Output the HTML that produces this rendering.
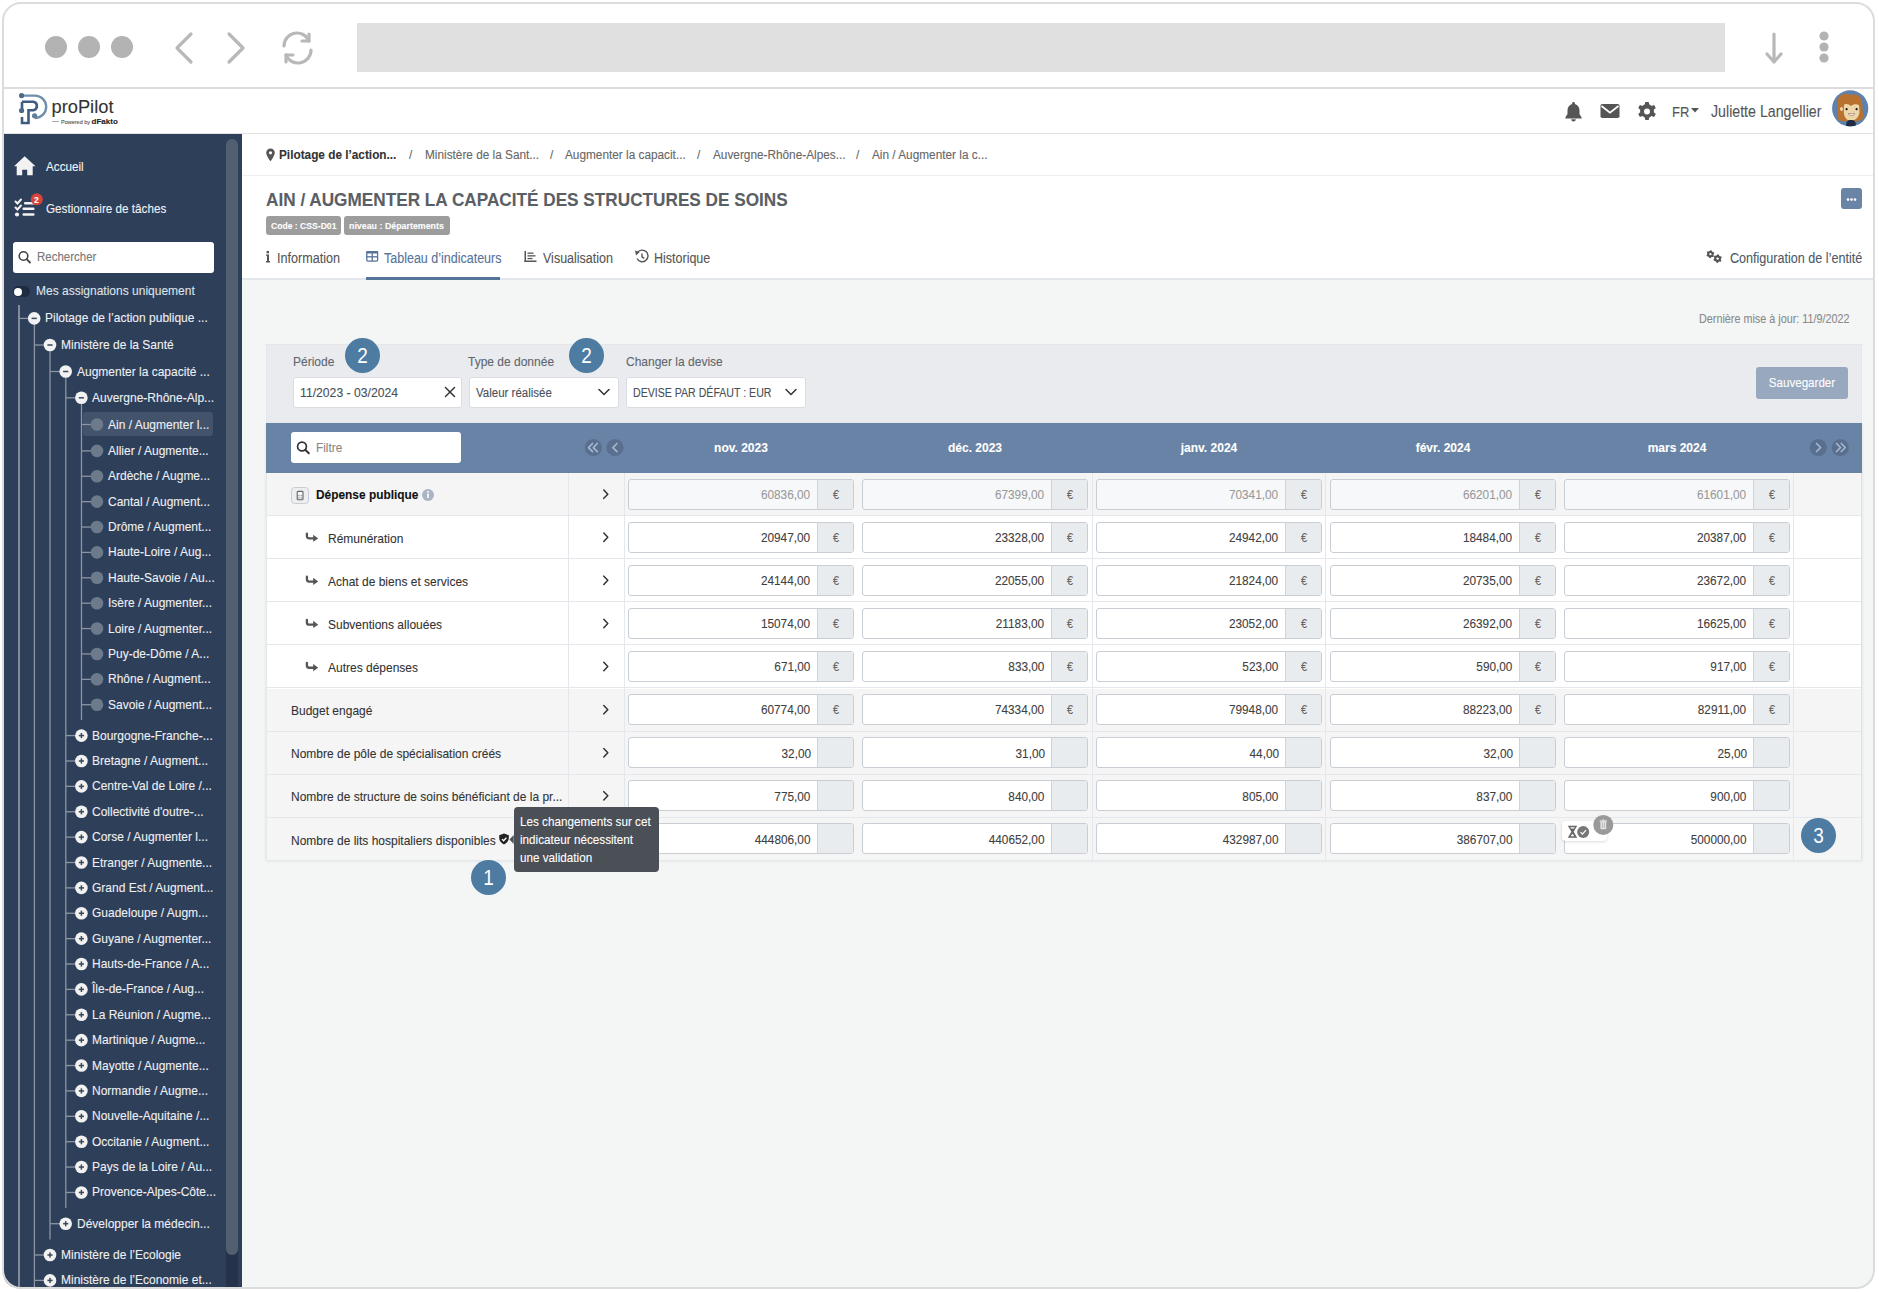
<!DOCTYPE html><html><head><meta charset="utf-8"><title>proPilot</title><style>
*{box-sizing:border-box;margin:0;padding:0}
html,body{width:1879px;height:1293px;overflow:hidden;background:#fff;font-family:"Liberation Sans",sans-serif}
.t{position:absolute;white-space:nowrap;-webkit-text-stroke:0.1px currentColor}
svg{position:absolute;overflow:visible}
</style></head><body>
<div style="position:absolute;left:4px;top:134px;width:1869px;height:1153px;background:#f4f6f6"></div>
<div style="position:absolute;left:242px;top:134px;width:1631px;height:145px;background:#fff"></div>
<div style="position:absolute;left:4px;top:4px;width:1869px;height:83px;background:#fff"></div>
<div style="position:absolute;left:4px;top:87px;width:1869px;height:2px;background:#dcdcdc"></div>
<div style="position:absolute;left:45px;top:36px;width:22px;height:22px;background:#b3b3b3;border-radius:50%"></div>
<div style="position:absolute;left:78px;top:36px;width:22px;height:22px;background:#b3b3b3;border-radius:50%"></div>
<div style="position:absolute;left:111px;top:36px;width:22px;height:22px;background:#b3b3b3;border-radius:50%"></div>
<svg style="left:0;top:0" width="1879" height="100"><g fill="none" stroke="#b8b8b8" stroke-width="3.2" stroke-linecap="round" stroke-linejoin="round"><polyline points="191,34 177,48 191,62"/><polyline points="229,34 243,48 229,62"/><path d="M284,46 A13,13 0 0 1 309,41"/><polyline points="309,34 309,41 302,41"/><path d="M311,50 A13,13 0 0 1 286,55"/><polyline points="286,62 286,55 293,55"/><line x1="1774" y1="34" x2="1774" y2="61"/><polyline points="1767,54 1774,62 1781,54"/></g><g fill="#b3b3b3"><circle cx="1824" cy="36" r="4.6"/><circle cx="1824" cy="47" r="4.6"/><circle cx="1824" cy="58" r="4.6"/></g></svg>
<div style="position:absolute;left:357px;top:23px;width:1368px;height:49px;background:#e0e0e0"></div>
<div style="position:absolute;left:4px;top:89px;width:1869px;height:44px;background:#fff"></div>
<div style="position:absolute;left:4px;top:133px;width:1869px;height:1px;background:#e2e2e2"></div>
<svg style="left:0;top:0" width="130" height="134"><g fill="none" stroke-linecap="butt"><path d="M22,95.6 H35 A11.2,11.2 0 0 1 35,118 " stroke="#6f8fab" stroke-width="2.4"/><path d="M22,101.8 H33.5 A4.3,4.3 0 0 1 33.5,110.2 H28.5 V123 H22 V117" stroke="#3f5d80" stroke-width="2.6"/><path d="M22,101.8 V110" stroke="#3f5d80" stroke-width="2.6"/></g><g fill="#4a6a8c"><circle cx="21.6" cy="95.6" r="2.6"/><circle cx="21.6" cy="110.5" r="2.6"/><circle cx="34.6" cy="115.8" r="2.6" fill="#5f7f9c"/></g></svg>
<div class="t" style="left:51.5px;transform-origin:0 50%;top:96.3px;font-size:18.30px;line-height:22px;color:#333;font-weight:400;">proPilot</div>
<div style="position:absolute;left:52px;top:121px;width:7px;height:0.8px;background:#aaa"></div>
<div class="t" style="left:61px;transform-origin:0 50%;top:117.1px;font-size:5.50px;line-height:9px;color:#555;font-weight:400;">Powered by <b style="font-size:8px;color:#222">dFakto</b></div>
<svg style="left:0;top:0" width="1879" height="134"><g fill="#555"><path d="M1573.5,102 c-0.9,0 -1.4,0.7 -1.4,1.4 v0.5 c-3,0.8 -4.6,3.4 -4.6,6.6 v3.6 l-2.1,3.3 v1 h16.2 v-1 l-2.1,-3.3 v-3.6 c0,-3.2 -1.6,-5.8 -4.6,-6.6 v-0.5 c0,-0.7 -0.5,-1.4 -1.4,-1.4z"/><path d="M1571.2,119.3 a2.3,2.3 0 0 0 4.6,0z"/><rect x="1600.5" y="104" width="19" height="14" rx="1.8"/></g><polyline points="1601.5,106 1610,112.6 1618.5,106" fill="none" stroke="#fff" stroke-width="1.8"/><g transform="translate(1647,111.5)"><path fill="#555" d="M-1.7,-9.5 h3.4 l0.6,2.6 a7.2,7.2 0 0 1 2.3,1.3 l2.5,-0.9 1.7,2.9 -2,1.8 a7.2,7.2 0 0 1 0,2.6 l2,1.8 -1.7,2.9 -2.5,-0.9 a7.2,7.2 0 0 1 -2.3,1.3 l-0.6,2.6 h-3.4 l-0.6,-2.6 a7.2,7.2 0 0 1 -2.3,-1.3 l-2.5,0.9 -1.7,-2.9 2,-1.8 a7.2,7.2 0 0 1 0,-2.6 l-2,-1.8 1.7,-2.9 2.5,0.9 a7.2,7.2 0 0 1 2.3,-1.3z"/><circle r="3" fill="#fff"/></g><polygon points="1691,108 1699,108 1695,112.5" fill="#555"/></svg>
<div class="t" style="left:1672px;transform-origin:0 50%;top:103.0px;font-size:14.56px;line-height:18px;color:#555;font-weight:400;transform:scaleX(0.8929);">FR</div>
<div class="t" style="left:1711px;transform-origin:0 50%;top:103.0px;font-size:15.90px;line-height:18px;color:#555;font-weight:400;transform:scaleX(0.8929);">Juliette Langellier</div>
<svg style="left:1832;top:90" width="37" height="37" viewBox="1832 90 37 37"><defs><clipPath id="av"><circle cx="1850.2" cy="108.4" r="18.1"/></clipPath></defs><g clip-path="url(#av)"><rect x="1830" y="88" width="40" height="40" fill="#5f82ad"/><path d="M1838,99 C1840,93 1848,93.5 1851,95 C1856,93 1862,96 1862,103 C1863,108 1862,112 1864,117 C1862,120 1858,122 1855,121 L1846,121 C1842,122 1838,121 1837,116 C1839,112 1837,106 1838,99Z" fill="#b8712f"/><path d="M1844,105 C1845,103 1849,104 1851,106 C1853,104 1857,104 1859,105 L1859.5,112 C1859,118 1855,120.5 1851,120.5 C1847,120.5 1844,118 1843.8,112Z" fill="#efd6a8"/><ellipse cx="1841.5" cy="109" rx="1.5" ry="2" fill="#efd6a8"/><path d="M1844,104 C1847,100 1853,101 1851,106 C1854,102 1858,102 1860,106 C1860,99 1854,96 1850,97 C1846,97 1843,100 1844,104Z" fill="#b8712f"/><circle cx="1846.6" cy="109.2" r="1.1" fill="#111"/><circle cx="1856.6" cy="109.2" r="1.1" fill="#111"/><path d="M1848,113.6 Q1851.5,117.8 1855,113.6 Z" fill="#f2f2f2" stroke="#8a5a4a" stroke-width="0.5"/><path d="M1846,126.5 C1846,121 1848,120 1851,120 C1854,120 1856,121 1856,126.5Z" fill="#1f2a44"/></g></svg>
<div style="position:absolute;left:4px;top:134px;width:238px;height:1153px;background:#2e3f5a"></div>
<div style="position:absolute;left:226.3px;top:1200px;width:11.5px;height:87px;background:#243349"></div>
<div style="position:absolute;left:226.3px;top:139px;width:11.5px;height:1116px;background:#525f70;border-radius:6px"></div>
<svg style="left:0;top:140" width="60" height="100"><path fill="#f2f2f2" d="M24.7,16.3 L14,26.3 L16.7,26.3 L16.7,35.3 L22.2,35.3 L22.2,29.8 L27.2,29.8 L27.2,35.3 L32.7,35.3 L32.7,26.3 L35.5,26.3 Z"/><g fill="none" stroke="#f2f2f2" stroke-width="2" stroke-linecap="round"><polyline points="15.5,61.5 17.5,63.5 21,59.5"/><polyline points="15.5,67.5 17.5,69.5 21,65.5"/></g><g fill="#f2f2f2"><rect x="24" y="62" width="11" height="2.6" rx="1"/><rect x="22.5" y="67.5" width="12" height="2.6" rx="1"/><rect x="22.5" y="73.2" width="12" height="2.6" rx="1"/><circle cx="17" cy="74.5" r="2.1"/></g><circle cx="36.8" cy="59.3" r="6" fill="#d9443a"/></svg>
<div class="t" style="left:33.8px;transform-origin:0 50%;top:194.6px;font-size:9.52px;line-height:10px;color:#fff;font-weight:700;transform:scaleX(0.8929);">2</div>
<div class="t" style="left:46px;transform-origin:0 50%;top:158.9px;font-size:13.10px;line-height:16px;color:#f0f2f4;font-weight:400;transform:scaleX(0.8929);">Accueil</div>
<div class="t" style="left:46px;transform-origin:0 50%;top:200.5px;font-size:13.10px;line-height:16px;color:#f0f2f4;font-weight:400;transform:scaleX(0.8929);">Gestionnaire de tâches</div>
<div style="position:absolute;left:13px;top:241.5px;width:201px;height:31.5px;background:#fff;border-radius:3px"></div>
<svg style="left:0;top:0" width="60" height="300"><circle cx="23.5" cy="256" r="4.3" fill="none" stroke="#444" stroke-width="1.6"/><line x1="26.6" y1="259.1" x2="30" y2="262.5" stroke="#444" stroke-width="1.8" stroke-linecap="round"/></svg>
<div class="t" style="left:37px;transform-origin:0 50%;top:249.3px;font-size:12.88px;line-height:16px;color:#777;font-weight:400;transform:scaleX(0.8929);">Rechercher</div>
<div style="position:absolute;left:13px;top:286.2px;width:17px;height:11px;background:#1f2c40;border-radius:6px"></div>
<div style="position:absolute;left:14px;top:288px;width:8px;height:8px;background:#fff;border-radius:50%"></div>
<div class="t" style="left:35.5px;transform-origin:0 50%;top:282.5px;font-size:13.44px;line-height:16px;color:#dfe3e8;font-weight:400;transform:scaleX(0.8929);">Mes assignations uniquement</div>
<div style="position:absolute;left:83px;top:411.5px;width:130px;height:24.5px;background:#43536b;border-radius:3px"></div>
<svg style="left:0;top:0" width="242" height="1293"><line x1="19" y1="305" x2="19" y2="1293" stroke="#8d95a1" stroke-width="1.8"/><line x1="34.4" y1="324" x2="34.4" y2="1293" stroke="#8d95a1" stroke-width="1.3"/><line x1="50" y1="351" x2="50" y2="1239.5" stroke="#8d95a1" stroke-width="1.3"/><line x1="65.8" y1="377" x2="65.8" y2="1208" stroke="#8d95a1" stroke-width="1.3"/><line x1="81.5" y1="404" x2="81.5" y2="720" stroke="#8d95a1" stroke-width="1.3"/><line x1="19" y1="318.4" x2="29.200000000000003" y2="318.4" stroke="#8d95a1" stroke-width="1.3"/><circle cx="34.2" cy="318.4" r="6.3" fill="#f2f2f2"/><rect x="31.6" y="317.65" width="5.2" height="1.5" fill="#3b475a"/><line x1="34.4" y1="345.0" x2="45.0" y2="345.0" stroke="#8d95a1" stroke-width="1.3"/><circle cx="50.0" cy="345.0" r="6.3" fill="#f2f2f2"/><rect x="47.4" y="344.25" width="5.2" height="1.5" fill="#3b475a"/><line x1="50" y1="371.5" x2="60.7" y2="371.5" stroke="#8d95a1" stroke-width="1.3"/><circle cx="65.7" cy="371.5" r="6.3" fill="#f2f2f2"/><rect x="63.1" y="370.75" width="5.2" height="1.5" fill="#3b475a"/><line x1="65.8" y1="397.8" x2="76.4" y2="397.8" stroke="#8d95a1" stroke-width="1.3"/><circle cx="81.4" cy="397.8" r="6.3" fill="#f2f2f2"/><rect x="78.80000000000001" y="397.05" width="5.2" height="1.5" fill="#3b475a"/><line x1="81.5" y1="424.5" x2="92.0" y2="424.5" stroke="#8d95a1" stroke-width="1.3"/><circle cx="97.0" cy="424.5" r="6.3" fill="#6d7a8b"/><line x1="81.5" y1="450.9" x2="92.0" y2="450.9" stroke="#8d95a1" stroke-width="1.3"/><circle cx="97.0" cy="450.9" r="6.3" fill="#6d7a8b"/><line x1="81.5" y1="476.28" x2="92.0" y2="476.28" stroke="#8d95a1" stroke-width="1.3"/><circle cx="97.0" cy="476.28" r="6.3" fill="#6d7a8b"/><line x1="81.5" y1="501.65999999999997" x2="92.0" y2="501.65999999999997" stroke="#8d95a1" stroke-width="1.3"/><circle cx="97.0" cy="501.65999999999997" r="6.3" fill="#6d7a8b"/><line x1="81.5" y1="527.04" x2="92.0" y2="527.04" stroke="#8d95a1" stroke-width="1.3"/><circle cx="97.0" cy="527.04" r="6.3" fill="#6d7a8b"/><line x1="81.5" y1="552.42" x2="92.0" y2="552.42" stroke="#8d95a1" stroke-width="1.3"/><circle cx="97.0" cy="552.42" r="6.3" fill="#6d7a8b"/><line x1="81.5" y1="577.8" x2="92.0" y2="577.8" stroke="#8d95a1" stroke-width="1.3"/><circle cx="97.0" cy="577.8" r="6.3" fill="#6d7a8b"/><line x1="81.5" y1="603.1800000000001" x2="92.0" y2="603.1800000000001" stroke="#8d95a1" stroke-width="1.3"/><circle cx="97.0" cy="603.1800000000001" r="6.3" fill="#6d7a8b"/><line x1="81.5" y1="628.56" x2="92.0" y2="628.56" stroke="#8d95a1" stroke-width="1.3"/><circle cx="97.0" cy="628.56" r="6.3" fill="#6d7a8b"/><line x1="81.5" y1="653.94" x2="92.0" y2="653.94" stroke="#8d95a1" stroke-width="1.3"/><circle cx="97.0" cy="653.94" r="6.3" fill="#6d7a8b"/><line x1="81.5" y1="679.3199999999999" x2="92.0" y2="679.3199999999999" stroke="#8d95a1" stroke-width="1.3"/><circle cx="97.0" cy="679.3199999999999" r="6.3" fill="#6d7a8b"/><line x1="81.5" y1="704.7" x2="92.0" y2="704.7" stroke="#8d95a1" stroke-width="1.3"/><circle cx="97.0" cy="704.7" r="6.3" fill="#6d7a8b"/><line x1="65.8" y1="735.6" x2="76.4" y2="735.6" stroke="#8d95a1" stroke-width="1.3"/><circle cx="81.4" cy="735.6" r="6.3" fill="#f2f2f2"/><rect x="78.80000000000001" y="734.85" width="5.2" height="1.5" fill="#3b475a"/><rect x="80.65" y="733.0" width="1.5" height="5.2" fill="#3b475a"/><line x1="65.8" y1="760.98" x2="76.4" y2="760.98" stroke="#8d95a1" stroke-width="1.3"/><circle cx="81.4" cy="760.98" r="6.3" fill="#f2f2f2"/><rect x="78.80000000000001" y="760.23" width="5.2" height="1.5" fill="#3b475a"/><rect x="80.65" y="758.38" width="1.5" height="5.2" fill="#3b475a"/><line x1="65.8" y1="786.36" x2="76.4" y2="786.36" stroke="#8d95a1" stroke-width="1.3"/><circle cx="81.4" cy="786.36" r="6.3" fill="#f2f2f2"/><rect x="78.80000000000001" y="785.61" width="5.2" height="1.5" fill="#3b475a"/><rect x="80.65" y="783.76" width="1.5" height="5.2" fill="#3b475a"/><line x1="65.8" y1="811.74" x2="76.4" y2="811.74" stroke="#8d95a1" stroke-width="1.3"/><circle cx="81.4" cy="811.74" r="6.3" fill="#f2f2f2"/><rect x="78.80000000000001" y="810.99" width="5.2" height="1.5" fill="#3b475a"/><rect x="80.65" y="809.14" width="1.5" height="5.2" fill="#3b475a"/><line x1="65.8" y1="837.12" x2="76.4" y2="837.12" stroke="#8d95a1" stroke-width="1.3"/><circle cx="81.4" cy="837.12" r="6.3" fill="#f2f2f2"/><rect x="78.80000000000001" y="836.37" width="5.2" height="1.5" fill="#3b475a"/><rect x="80.65" y="834.52" width="1.5" height="5.2" fill="#3b475a"/><line x1="65.8" y1="862.5" x2="76.4" y2="862.5" stroke="#8d95a1" stroke-width="1.3"/><circle cx="81.4" cy="862.5" r="6.3" fill="#f2f2f2"/><rect x="78.80000000000001" y="861.75" width="5.2" height="1.5" fill="#3b475a"/><rect x="80.65" y="859.9" width="1.5" height="5.2" fill="#3b475a"/><line x1="65.8" y1="887.88" x2="76.4" y2="887.88" stroke="#8d95a1" stroke-width="1.3"/><circle cx="81.4" cy="887.88" r="6.3" fill="#f2f2f2"/><rect x="78.80000000000001" y="887.13" width="5.2" height="1.5" fill="#3b475a"/><rect x="80.65" y="885.28" width="1.5" height="5.2" fill="#3b475a"/><line x1="65.8" y1="913.26" x2="76.4" y2="913.26" stroke="#8d95a1" stroke-width="1.3"/><circle cx="81.4" cy="913.26" r="6.3" fill="#f2f2f2"/><rect x="78.80000000000001" y="912.51" width="5.2" height="1.5" fill="#3b475a"/><rect x="80.65" y="910.66" width="1.5" height="5.2" fill="#3b475a"/><line x1="65.8" y1="938.64" x2="76.4" y2="938.64" stroke="#8d95a1" stroke-width="1.3"/><circle cx="81.4" cy="938.64" r="6.3" fill="#f2f2f2"/><rect x="78.80000000000001" y="937.89" width="5.2" height="1.5" fill="#3b475a"/><rect x="80.65" y="936.04" width="1.5" height="5.2" fill="#3b475a"/><line x1="65.8" y1="964.02" x2="76.4" y2="964.02" stroke="#8d95a1" stroke-width="1.3"/><circle cx="81.4" cy="964.02" r="6.3" fill="#f2f2f2"/><rect x="78.80000000000001" y="963.27" width="5.2" height="1.5" fill="#3b475a"/><rect x="80.65" y="961.42" width="1.5" height="5.2" fill="#3b475a"/><line x1="65.8" y1="989.4" x2="76.4" y2="989.4" stroke="#8d95a1" stroke-width="1.3"/><circle cx="81.4" cy="989.4" r="6.3" fill="#f2f2f2"/><rect x="78.80000000000001" y="988.65" width="5.2" height="1.5" fill="#3b475a"/><rect x="80.65" y="986.8" width="1.5" height="5.2" fill="#3b475a"/><line x1="65.8" y1="1014.78" x2="76.4" y2="1014.78" stroke="#8d95a1" stroke-width="1.3"/><circle cx="81.4" cy="1014.78" r="6.3" fill="#f2f2f2"/><rect x="78.80000000000001" y="1014.03" width="5.2" height="1.5" fill="#3b475a"/><rect x="80.65" y="1012.18" width="1.5" height="5.2" fill="#3b475a"/><line x1="65.8" y1="1040.16" x2="76.4" y2="1040.16" stroke="#8d95a1" stroke-width="1.3"/><circle cx="81.4" cy="1040.16" r="6.3" fill="#f2f2f2"/><rect x="78.80000000000001" y="1039.41" width="5.2" height="1.5" fill="#3b475a"/><rect x="80.65" y="1037.5600000000002" width="1.5" height="5.2" fill="#3b475a"/><line x1="65.8" y1="1065.54" x2="76.4" y2="1065.54" stroke="#8d95a1" stroke-width="1.3"/><circle cx="81.4" cy="1065.54" r="6.3" fill="#f2f2f2"/><rect x="78.80000000000001" y="1064.79" width="5.2" height="1.5" fill="#3b475a"/><rect x="80.65" y="1062.94" width="1.5" height="5.2" fill="#3b475a"/><line x1="65.8" y1="1090.92" x2="76.4" y2="1090.92" stroke="#8d95a1" stroke-width="1.3"/><circle cx="81.4" cy="1090.92" r="6.3" fill="#f2f2f2"/><rect x="78.80000000000001" y="1090.17" width="5.2" height="1.5" fill="#3b475a"/><rect x="80.65" y="1088.3200000000002" width="1.5" height="5.2" fill="#3b475a"/><line x1="65.8" y1="1116.3" x2="76.4" y2="1116.3" stroke="#8d95a1" stroke-width="1.3"/><circle cx="81.4" cy="1116.3" r="6.3" fill="#f2f2f2"/><rect x="78.80000000000001" y="1115.55" width="5.2" height="1.5" fill="#3b475a"/><rect x="80.65" y="1113.7" width="1.5" height="5.2" fill="#3b475a"/><line x1="65.8" y1="1141.68" x2="76.4" y2="1141.68" stroke="#8d95a1" stroke-width="1.3"/><circle cx="81.4" cy="1141.68" r="6.3" fill="#f2f2f2"/><rect x="78.80000000000001" y="1140.93" width="5.2" height="1.5" fill="#3b475a"/><rect x="80.65" y="1139.0800000000002" width="1.5" height="5.2" fill="#3b475a"/><line x1="65.8" y1="1167.06" x2="76.4" y2="1167.06" stroke="#8d95a1" stroke-width="1.3"/><circle cx="81.4" cy="1167.06" r="6.3" fill="#f2f2f2"/><rect x="78.80000000000001" y="1166.31" width="5.2" height="1.5" fill="#3b475a"/><rect x="80.65" y="1164.46" width="1.5" height="5.2" fill="#3b475a"/><line x1="65.8" y1="1192.44" x2="76.4" y2="1192.44" stroke="#8d95a1" stroke-width="1.3"/><circle cx="81.4" cy="1192.44" r="6.3" fill="#f2f2f2"/><rect x="78.80000000000001" y="1191.69" width="5.2" height="1.5" fill="#3b475a"/><rect x="80.65" y="1189.8400000000001" width="1.5" height="5.2" fill="#3b475a"/><line x1="50" y1="1223.7" x2="60.7" y2="1223.7" stroke="#8d95a1" stroke-width="1.3"/><circle cx="65.7" cy="1223.7" r="6.3" fill="#f2f2f2"/><rect x="63.1" y="1222.95" width="5.2" height="1.5" fill="#3b475a"/><rect x="64.95" y="1221.1000000000001" width="1.5" height="5.2" fill="#3b475a"/><line x1="34.4" y1="1255.0" x2="45.0" y2="1255.0" stroke="#8d95a1" stroke-width="1.3"/><circle cx="50.0" cy="1255.0" r="6.3" fill="#f2f2f2"/><rect x="47.4" y="1254.25" width="5.2" height="1.5" fill="#3b475a"/><rect x="49.25" y="1252.4" width="1.5" height="5.2" fill="#3b475a"/><line x1="34.4" y1="1280.4" x2="45.0" y2="1280.4" stroke="#8d95a1" stroke-width="1.3"/><circle cx="50.0" cy="1280.4" r="6.3" fill="#f2f2f2"/><rect x="47.4" y="1279.65" width="5.2" height="1.5" fill="#3b475a"/><rect x="49.25" y="1277.8000000000002" width="1.5" height="5.2" fill="#3b475a"/></svg>
<div class="t" style="left:45.2px;transform-origin:0 50%;top:310.4px;font-size:13.44px;line-height:16px;color:#eef0f3;font-weight:400;transform:scaleX(0.8929);">Pilotage de l’action publique ...</div>
<div class="t" style="left:61.0px;transform-origin:0 50%;top:337.0px;font-size:13.44px;line-height:16px;color:#eef0f3;font-weight:400;transform:scaleX(0.8929);">Ministère de la Santé</div>
<div class="t" style="left:76.7px;transform-origin:0 50%;top:363.5px;font-size:13.44px;line-height:16px;color:#eef0f3;font-weight:400;transform:scaleX(0.8929);">Augmenter la capacité ...</div>
<div class="t" style="left:92.4px;transform-origin:0 50%;top:389.8px;font-size:13.44px;line-height:16px;color:#eef0f3;font-weight:400;transform:scaleX(0.8929);">Auvergne-Rhône-Alp...</div>
<div class="t" style="left:108.0px;transform-origin:0 50%;top:416.5px;font-size:13.44px;line-height:16px;color:#eef0f3;font-weight:400;transform:scaleX(0.8929);">Ain / Augmenter l...</div>
<div class="t" style="left:108.0px;transform-origin:0 50%;top:442.9px;font-size:13.44px;line-height:16px;color:#eef0f3;font-weight:400;transform:scaleX(0.8929);">Allier / Augmente...</div>
<div class="t" style="left:108.0px;transform-origin:0 50%;top:468.3px;font-size:13.44px;line-height:16px;color:#eef0f3;font-weight:400;transform:scaleX(0.8929);">Ardèche / Augme...</div>
<div class="t" style="left:108.0px;transform-origin:0 50%;top:493.7px;font-size:13.44px;line-height:16px;color:#eef0f3;font-weight:400;transform:scaleX(0.8929);">Cantal / Augment...</div>
<div class="t" style="left:108.0px;transform-origin:0 50%;top:519.0px;font-size:13.44px;line-height:16px;color:#eef0f3;font-weight:400;transform:scaleX(0.8929);">Drôme / Augment...</div>
<div class="t" style="left:108.0px;transform-origin:0 50%;top:544.4px;font-size:13.44px;line-height:16px;color:#eef0f3;font-weight:400;transform:scaleX(0.8929);">Haute-Loire / Aug...</div>
<div class="t" style="left:108.0px;transform-origin:0 50%;top:569.8px;font-size:13.44px;line-height:16px;color:#eef0f3;font-weight:400;transform:scaleX(0.8929);">Haute-Savoie / Au...</div>
<div class="t" style="left:108.0px;transform-origin:0 50%;top:595.2px;font-size:13.44px;line-height:16px;color:#eef0f3;font-weight:400;transform:scaleX(0.8929);">Isère / Augmenter...</div>
<div class="t" style="left:108.0px;transform-origin:0 50%;top:620.6px;font-size:13.44px;line-height:16px;color:#eef0f3;font-weight:400;transform:scaleX(0.8929);">Loire / Augmenter...</div>
<div class="t" style="left:108.0px;transform-origin:0 50%;top:645.9px;font-size:13.44px;line-height:16px;color:#eef0f3;font-weight:400;transform:scaleX(0.8929);">Puy-de-Dôme / A...</div>
<div class="t" style="left:108.0px;transform-origin:0 50%;top:671.3px;font-size:13.44px;line-height:16px;color:#eef0f3;font-weight:400;transform:scaleX(0.8929);">Rhône / Augment...</div>
<div class="t" style="left:108.0px;transform-origin:0 50%;top:696.7px;font-size:13.44px;line-height:16px;color:#eef0f3;font-weight:400;transform:scaleX(0.8929);">Savoie / Augment...</div>
<div class="t" style="left:92.4px;transform-origin:0 50%;top:727.6px;font-size:13.44px;line-height:16px;color:#eef0f3;font-weight:400;transform:scaleX(0.8929);">Bourgogne-Franche-...</div>
<div class="t" style="left:92.4px;transform-origin:0 50%;top:753.0px;font-size:13.44px;line-height:16px;color:#eef0f3;font-weight:400;transform:scaleX(0.8929);">Bretagne / Augment...</div>
<div class="t" style="left:92.4px;transform-origin:0 50%;top:778.4px;font-size:13.44px;line-height:16px;color:#eef0f3;font-weight:400;transform:scaleX(0.8929);">Centre-Val de Loire /...</div>
<div class="t" style="left:92.4px;transform-origin:0 50%;top:803.7px;font-size:13.44px;line-height:16px;color:#eef0f3;font-weight:400;transform:scaleX(0.8929);">Collectivité d'outre-...</div>
<div class="t" style="left:92.4px;transform-origin:0 50%;top:829.1px;font-size:13.44px;line-height:16px;color:#eef0f3;font-weight:400;transform:scaleX(0.8929);">Corse / Augmenter l...</div>
<div class="t" style="left:92.4px;transform-origin:0 50%;top:854.5px;font-size:13.44px;line-height:16px;color:#eef0f3;font-weight:400;transform:scaleX(0.8929);">Etranger / Augmente...</div>
<div class="t" style="left:92.4px;transform-origin:0 50%;top:879.9px;font-size:13.44px;line-height:16px;color:#eef0f3;font-weight:400;transform:scaleX(0.8929);">Grand Est / Augment...</div>
<div class="t" style="left:92.4px;transform-origin:0 50%;top:905.3px;font-size:13.44px;line-height:16px;color:#eef0f3;font-weight:400;transform:scaleX(0.8929);">Guadeloupe / Augm...</div>
<div class="t" style="left:92.4px;transform-origin:0 50%;top:930.6px;font-size:13.44px;line-height:16px;color:#eef0f3;font-weight:400;transform:scaleX(0.8929);">Guyane / Augmenter...</div>
<div class="t" style="left:92.4px;transform-origin:0 50%;top:956.0px;font-size:13.44px;line-height:16px;color:#eef0f3;font-weight:400;transform:scaleX(0.8929);">Hauts-de-France / A...</div>
<div class="t" style="left:92.4px;transform-origin:0 50%;top:981.4px;font-size:13.44px;line-height:16px;color:#eef0f3;font-weight:400;transform:scaleX(0.8929);">Île-de-France / Aug...</div>
<div class="t" style="left:92.4px;transform-origin:0 50%;top:1006.8px;font-size:13.44px;line-height:16px;color:#eef0f3;font-weight:400;transform:scaleX(0.8929);">La Réunion / Augme...</div>
<div class="t" style="left:92.4px;transform-origin:0 50%;top:1032.2px;font-size:13.44px;line-height:16px;color:#eef0f3;font-weight:400;transform:scaleX(0.8929);">Martinique / Augme...</div>
<div class="t" style="left:92.4px;transform-origin:0 50%;top:1057.5px;font-size:13.44px;line-height:16px;color:#eef0f3;font-weight:400;transform:scaleX(0.8929);">Mayotte / Augmente...</div>
<div class="t" style="left:92.4px;transform-origin:0 50%;top:1082.9px;font-size:13.44px;line-height:16px;color:#eef0f3;font-weight:400;transform:scaleX(0.8929);">Normandie / Augme...</div>
<div class="t" style="left:92.4px;transform-origin:0 50%;top:1108.3px;font-size:13.44px;line-height:16px;color:#eef0f3;font-weight:400;transform:scaleX(0.8929);">Nouvelle-Aquitaine /...</div>
<div class="t" style="left:92.4px;transform-origin:0 50%;top:1133.7px;font-size:13.44px;line-height:16px;color:#eef0f3;font-weight:400;transform:scaleX(0.8929);">Occitanie / Augment...</div>
<div class="t" style="left:92.4px;transform-origin:0 50%;top:1159.1px;font-size:13.44px;line-height:16px;color:#eef0f3;font-weight:400;transform:scaleX(0.8929);">Pays de la Loire / Au...</div>
<div class="t" style="left:92.4px;transform-origin:0 50%;top:1184.4px;font-size:13.44px;line-height:16px;color:#eef0f3;font-weight:400;transform:scaleX(0.8929);">Provence-Alpes-Côte...</div>
<div class="t" style="left:76.7px;transform-origin:0 50%;top:1215.7px;font-size:13.44px;line-height:16px;color:#eef0f3;font-weight:400;transform:scaleX(0.8929);">Développer la médecin...</div>
<div class="t" style="left:61.0px;transform-origin:0 50%;top:1247.0px;font-size:13.44px;line-height:16px;color:#eef0f3;font-weight:400;transform:scaleX(0.8929);">Ministère de l’Ecologie</div>
<div class="t" style="left:61.0px;transform-origin:0 50%;top:1272.4px;font-size:13.44px;line-height:16px;color:#eef0f3;font-weight:400;transform:scaleX(0.8929);">Ministère de l’Economie et...</div>
<div style="position:absolute;left:242px;top:175px;width:1631px;height:1px;background:#eeeeee"></div>
<svg style="left:0;top:0" width="400" height="180"><path fill="#555" d="M270.5,148.5 a4.3,4.3 0 0 0 -4.3,4.3 c0,3 4.3,8.6 4.3,8.6 s4.3,-5.6 4.3,-8.6 a4.3,4.3 0 0 0 -4.3,-4.3z"/><circle cx="270.5" cy="152.8" r="1.6" fill="#fff"/></svg>
<div class="t" style="left:279px;transform-origin:0 50%;top:147.0px;font-size:13.22px;line-height:16px;color:#333;font-weight:700;transform:scaleX(0.8929);">Pilotage de l’action...</div>
<div class="t" style="left:409px;transform-origin:0 50%;top:147.0px;font-size:13.22px;line-height:16px;color:#666;font-weight:400;transform:scaleX(0.8929);">/</div>
<div class="t" style="left:425px;transform-origin:0 50%;top:147.0px;font-size:13.22px;line-height:16px;color:#666;font-weight:400;transform:scaleX(0.8929);">Ministère de la Sant...</div>
<div class="t" style="left:550px;transform-origin:0 50%;top:147.0px;font-size:13.22px;line-height:16px;color:#666;font-weight:400;transform:scaleX(0.8929);">/</div>
<div class="t" style="left:565px;transform-origin:0 50%;top:147.0px;font-size:13.22px;line-height:16px;color:#666;font-weight:400;transform:scaleX(0.8929);">Augmenter la capacit...</div>
<div class="t" style="left:697px;transform-origin:0 50%;top:147.0px;font-size:13.22px;line-height:16px;color:#666;font-weight:400;transform:scaleX(0.8929);">/</div>
<div class="t" style="left:713px;transform-origin:0 50%;top:147.0px;font-size:13.22px;line-height:16px;color:#666;font-weight:400;transform:scaleX(0.8929);">Auvergne-Rhône-Alpes...</div>
<div class="t" style="left:856px;transform-origin:0 50%;top:147.0px;font-size:13.22px;line-height:16px;color:#666;font-weight:400;transform:scaleX(0.8929);">/</div>
<div class="t" style="left:872px;transform-origin:0 50%;top:147.0px;font-size:13.22px;line-height:16px;color:#666;font-weight:400;transform:scaleX(0.8929);">Ain / Augmenter la c...</div>
<div class="t" style="left:266px;transform-origin:0 50%;top:189.3px;font-size:19.26px;line-height:22px;color:#5a5f65;font-weight:700;transform:scaleX(0.8929);">AIN / AUGMENTER LA CAPACITÉ DES STRUCTURES DE SOINS</div>
<div style="position:absolute;left:266px;top:216px;width:75px;height:18.5px;background:#9d9d9d;border-radius:3px"></div>
<div style="position:absolute;left:344px;top:216px;width:106px;height:18.5px;background:#9d9d9d;border-radius:3px"></div>
<div class="t" style="left:271px;transform-origin:0 50%;top:220.2px;font-size:9.63px;line-height:12px;color:#fff;font-weight:700;transform:scaleX(0.8929);">Code : CSS-D01</div>
<div class="t" style="left:349px;transform-origin:0 50%;top:220.2px;font-size:9.91px;line-height:12px;color:#fff;font-weight:700;transform:scaleX(0.8929);">niveau : Départements</div>
<div style="position:absolute;left:1841px;top:188px;width:21px;height:21px;background:#6a84a5;border-radius:3px"></div>
<svg style="left:0;top:0" width="1879" height="300"><g fill="#fff"><circle cx="1848" cy="199.6" r="1.3"/><circle cx="1851.5" cy="199.6" r="1.3"/><circle cx="1855" cy="199.6" r="1.3"/></g><g fill="#555"><rect x="266.6" y="251" width="2.4" height="2.3"/><path d="M266,254.5 h3 v6.6 h1 v1.3 h-4 v-1.3 h1 v-5.3 h-1z"/></g><g fill="none" stroke="#56739b" stroke-width="1.3"><rect x="366.8" y="251.6" width="10.8" height="9.6" rx="1.3"/><line x1="366.8" y1="256.8" x2="377.6" y2="256.8"/><line x1="372.2" y1="253" x2="372.2" y2="261"/></g><rect x="366.2" y="251" width="12" height="2.6" rx="1" fill="#56739b"/><g fill="#555"><rect x="524.5" y="251" width="1.5" height="11"/><rect x="524.5" y="260.5" width="12" height="1.5"/><rect x="527.5" y="252.5" width="6" height="1.3"/><rect x="527.5" y="255.2" width="8" height="1.3"/><rect x="527.5" y="257.9" width="5" height="1.3"/></g><g fill="none" stroke="#555" stroke-width="1.4"><path d="M637.5,252.5 A5.8,5.8 0 1 1 637,258.5"/><polyline points="642,253.5 642,256.8 644.3,258.3"/></g><polygon points="635,250.5 639.6,252.2 636,255.5" fill="#555"/><polygon points="1710.40,250.20 1711.44,250.34 1712.00,251.43 1712.66,251.94 1713.86,252.20 1714.26,253.16 1713.60,254.20 1713.49,255.03 1713.86,256.20 1713.23,257.03 1712.00,256.97 1711.23,257.29 1710.40,258.20 1709.36,258.06 1708.80,256.97 1708.14,256.46 1706.94,256.20 1706.54,255.24 1707.20,254.20 1707.31,253.37 1706.94,252.20 1707.57,251.37 1708.80,251.43 1709.57,251.11" fill="#555"/><polygon points="1717.60,254.30 1718.71,254.45 1719.30,255.66 1720.00,256.20 1721.32,256.45 1721.75,257.49 1721.00,258.60 1720.88,259.48 1721.32,260.75 1720.64,261.64 1719.30,261.54 1718.48,261.88 1717.60,262.90 1716.49,262.75 1715.90,261.54 1715.20,261.00 1713.88,260.75 1713.45,259.71 1714.20,258.60 1714.32,257.72 1713.88,256.45 1714.56,255.56 1715.90,255.66 1716.72,255.32" fill="#555"/><g fill="#fff"><circle cx="1710.4" cy="254.2" r="1.1"/><circle cx="1717.6" cy="258.6" r="1.2"/></g></svg>
<div class="t" style="left:277px;transform-origin:0 50%;top:248.9px;font-size:14.11px;line-height:18px;color:#555;font-weight:400;transform:scaleX(0.8929);">Information</div>
<div class="t" style="left:384.4px;transform-origin:0 50%;top:248.9px;font-size:14.00px;line-height:18px;color:#56739b;font-weight:400;transform:scaleX(0.8929);">Tableau d’indicateurs</div>
<div class="t" style="left:542.7px;transform-origin:0 50%;top:248.9px;font-size:14.00px;line-height:18px;color:#555;font-weight:400;transform:scaleX(0.8929);">Visualisation</div>
<div class="t" style="left:654px;transform-origin:0 50%;top:248.9px;font-size:14.00px;line-height:18px;color:#555;font-weight:400;transform:scaleX(0.8929);">Historique</div>
<div class="t" style="right:17px;transform-origin:100% 50%;top:248.9px;font-size:14.11px;line-height:18px;color:#4e5a68;font-weight:400;transform:scaleX(0.8929);">Configuration de l’entité</div>
<div style="position:absolute;left:242px;top:278px;width:1631px;height:1.5px;background:#e3e6ea"></div>
<div style="position:absolute;left:366px;top:277.2px;width:134px;height:2.6px;background:#56739b"></div>
<div class="t" style="right:29px;transform-origin:100% 50%;top:312.0px;font-size:12.10px;line-height:14px;color:#8a8a8a;font-weight:400;transform:scaleX(0.8929);">Dernière mise à jour: 11/9/2022</div>
<div style="position:absolute;left:266px;top:343.7px;width:1596px;height:80px;background:#e9ebee;border:1px solid #e4e7ea;border-bottom:none"></div>
<div class="t" style="left:292.6px;transform-origin:0 50%;top:354.0px;font-size:13.44px;line-height:16px;color:#60666d;font-weight:400;transform:scaleX(0.8929);">Période</div>
<div class="t" style="left:468.3px;transform-origin:0 50%;top:354.0px;font-size:13.44px;line-height:16px;color:#60666d;font-weight:400;transform:scaleX(0.8929);">Type de donnée</div>
<div class="t" style="left:625.8px;transform-origin:0 50%;top:354.0px;font-size:13.44px;line-height:16px;color:#60666d;font-weight:400;transform:scaleX(0.8929);">Changer la devise</div>
<div style="position:absolute;left:292.5px;top:376.5px;width:169.5px;height:31px;background:#fff;border:1px solid #d9dde2;border-radius:3px"></div>
<div style="position:absolute;left:469px;top:376.5px;width:150px;height:31px;background:#fff;border:1px solid #d9dde2;border-radius:3px"></div>
<div style="position:absolute;left:625.8px;top:376.5px;width:180px;height:31px;background:#fff;border:1px solid #d9dde2;border-radius:3px"></div>
<div class="t" style="left:300px;transform-origin:0 50%;top:384.8px;font-size:13.66px;line-height:16px;color:#495057;font-weight:400;transform:scaleX(0.8929);">11/2023 - 03/2024</div>
<div class="t" style="left:475.7px;transform-origin:0 50%;top:384.8px;font-size:12.88px;line-height:16px;color:#495057;font-weight:400;transform:scaleX(0.8929);">Valeur réalisée</div>
<div class="t" style="left:632.8px;transform-origin:0 50%;top:384.8px;font-size:11.87px;line-height:16px;color:#495057;font-weight:400;transform:scaleX(0.8929);">DEVISE PAR DÉFAUT : EUR</div>
<svg style="left:0;top:0" width="1879" height="420"><g fill="none" stroke="#333" stroke-width="1.5" stroke-linecap="round"><line x1="445.5" y1="387.5" x2="454.5" y2="396.5"/><line x1="454.5" y1="387.5" x2="445.5" y2="396.5"/><polyline points="599,389.5 604,394.5 609,389.5"/><polyline points="786,389.5 791,394.5 796,389.5"/></g></svg>
<div style="position:absolute;left:1756px;top:367px;width:92px;height:31.5px;background:#97a8bf;border-radius:3px"></div>
<div class="t" style="left:1756.0px;width:92px;text-align:center;transform-origin:50% 50%;top:375.0px;font-size:12.99px;line-height:16px;color:#fff;font-weight:400;transform:scaleX(0.8929);">Sauvegarder</div>
<div style="position:absolute;left:266px;top:422.6px;width:1595.5px;height:437.9px;background:#fff;box-shadow:0 1px 3px rgba(0,0,0,0.10)"></div>
<div style="position:absolute;left:266px;top:422.6px;width:1595.5px;height:50.0px;background:#6883a5"></div>
<div style="position:absolute;left:266px;top:473.0px;width:1595.5px;height:43.1px;background:#f5f5f6;border-bottom:1px solid #e4e7eb"></div>
<div style="position:absolute;left:266px;top:516.1px;width:1595.5px;height:43.1px;background:#fff;border-bottom:1px solid #e4e7eb"></div>
<div style="position:absolute;left:266px;top:559.2px;width:1595.5px;height:43.1px;background:#fff;border-bottom:1px solid #e4e7eb"></div>
<div style="position:absolute;left:266px;top:602.3000000000001px;width:1595.5px;height:43.1px;background:#fff;border-bottom:1px solid #e4e7eb"></div>
<div style="position:absolute;left:266px;top:645.4px;width:1595.5px;height:43.1px;background:#fff;border-bottom:1px solid #e4e7eb"></div>
<div style="position:absolute;left:266px;top:688.5px;width:1595.5px;height:43.1px;background:#f5f5f6;border-bottom:1px solid #e4e7eb"></div>
<div style="position:absolute;left:266px;top:731.6px;width:1595.5px;height:43.1px;background:#f5f5f6;border-bottom:1px solid #e4e7eb"></div>
<div style="position:absolute;left:266px;top:774.6999999999999px;width:1595.5px;height:43.1px;background:#f5f5f6;border-bottom:1px solid #e4e7eb"></div>
<div style="position:absolute;left:266px;top:817.8000000000001px;width:1595.5px;height:43.1px;background:#f5f5f6;border-bottom:1px solid #e4e7eb"></div>
<div style="position:absolute;left:568.0px;top:472.6px;width:1px;height:387.9px;background:#e4e7eb"></div>
<div style="position:absolute;left:623.9px;top:472.6px;width:1px;height:387.9px;background:#e4e7eb"></div>
<div style="position:absolute;left:1091.9px;top:472.6px;width:1px;height:387.9px;background:#e4e7eb"></div>
<div style="position:absolute;left:1325.2px;top:472.6px;width:1px;height:387.9px;background:#e4e7eb"></div>
<div style="position:absolute;left:1793.0px;top:472.6px;width:1px;height:387.9px;background:#e4e7eb"></div>
<div style="position:absolute;left:266px;top:472.6px;width:1px;height:387.9px;background:#e4e7eb"></div>
<div style="position:absolute;left:1860.5px;top:472.6px;width:1px;height:387.9px;background:#dde1e6"></div>
<div style="position:absolute;left:291.3px;top:432px;width:169.7px;height:30.7px;background:#fff;border-radius:3px"></div>
<svg style="left:0;top:0" width="1879" height="900"><circle cx="302" cy="446.5" r="4.4" fill="none" stroke="#333" stroke-width="1.7"/><line x1="305.2" y1="449.7" x2="308.8" y2="453.3" stroke="#333" stroke-width="2" stroke-linecap="round"/><g fill="#596f8f"><circle cx="593.4" cy="447.5" r="8.6"/><circle cx="614.9" cy="447.5" r="8.6"/><circle cx="1818.3" cy="447.5" r="8.6"/><circle cx="1840.3" cy="447.5" r="8.6"/></g><g fill="none" stroke="#a6b6cc" stroke-width="1.7" stroke-linecap="round" stroke-linejoin="round"><polyline points="592.5,443.5 588.5,447.6 592.5,451.6"/><polyline points="597.3,443.5 593.3,447.6 597.3,451.6"/><polyline points="616.9,443.5 612.9,447.6 616.9,451.6"/><polyline points="1816.6,443.5 1820.6,447.5 1816.6,451.5"/><polyline points="1836.5,443.5 1840.5,447.5 1836.5,451.5"/><polyline points="1841.3,443.5 1845.3,447.5 1841.3,451.5"/></g></svg>
<div class="t" style="left:316px;transform-origin:0 50%;top:439.5px;font-size:13.22px;line-height:16px;color:#888;font-weight:400;transform:scaleX(0.8929);">Filtre</div>
<div class="t" style="left:641.2px;width:200px;text-align:center;transform-origin:50% 50%;top:439.8px;font-size:13.44px;line-height:16px;color:#fff;font-weight:700;transform:scaleX(0.8929);">nov. 2023</div>
<div class="t" style="left:875.2px;width:200px;text-align:center;transform-origin:50% 50%;top:439.8px;font-size:13.44px;line-height:16px;color:#fff;font-weight:700;transform:scaleX(0.8929);">déc. 2023</div>
<div class="t" style="left:1109.0500000000002px;width:200px;text-align:center;transform-origin:50% 50%;top:439.8px;font-size:13.44px;line-height:16px;color:#fff;font-weight:700;transform:scaleX(0.8929);">janv. 2024</div>
<div class="t" style="left:1342.85px;width:200px;text-align:center;transform-origin:50% 50%;top:439.8px;font-size:13.44px;line-height:16px;color:#fff;font-weight:700;transform:scaleX(0.8929);">févr. 2024</div>
<div class="t" style="left:1577.0px;width:200px;text-align:center;transform-origin:50% 50%;top:439.8px;font-size:13.44px;line-height:16px;color:#fff;font-weight:700;transform:scaleX(0.8929);">mars 2024</div>
<div style="position:absolute;left:628.1px;top:478.6px;width:225.8px;height:31px;border:1px solid #c9ced4;border-radius:3px;background:#f7f8f9;overflow:hidden"><div style="position:absolute;right:0;top:0;width:36px;height:29px;background:#e9ecef;border-left:1px solid #ced4da"></div></div>
<div class="t" style="right:1068.4px;transform-origin:100% 50%;top:486.9px;font-size:13.22px;line-height:16px;color:#9a9a9a;font-weight:400;transform:scaleX(0.8929);">60836,00</div>
<div class="t" style="left:825.7px;width:20px;text-align:center;transform-origin:50% 50%;top:486.7px;font-size:12.32px;line-height:16px;color:#666;font-weight:400;transform:scaleX(0.8929);">€</div>
<div style="position:absolute;left:862.1px;top:478.6px;width:225.8px;height:31px;border:1px solid #c9ced4;border-radius:3px;background:#f7f8f9;overflow:hidden"><div style="position:absolute;right:0;top:0;width:36px;height:29px;background:#e9ecef;border-left:1px solid #ced4da"></div></div>
<div class="t" style="right:834.4000000000001px;transform-origin:100% 50%;top:486.9px;font-size:13.22px;line-height:16px;color:#9a9a9a;font-weight:400;transform:scaleX(0.8929);">67399,00</div>
<div class="t" style="left:1059.7px;width:20px;text-align:center;transform-origin:50% 50%;top:486.7px;font-size:12.32px;line-height:16px;color:#666;font-weight:400;transform:scaleX(0.8929);">€</div>
<div style="position:absolute;left:1096.1px;top:478.6px;width:225.8px;height:31px;border:1px solid #c9ced4;border-radius:3px;background:#f7f8f9;overflow:hidden"><div style="position:absolute;right:0;top:0;width:36px;height:29px;background:#e9ecef;border-left:1px solid #ced4da"></div></div>
<div class="t" style="right:600.4000000000001px;transform-origin:100% 50%;top:486.9px;font-size:13.22px;line-height:16px;color:#9a9a9a;font-weight:400;transform:scaleX(0.8929);">70341,00</div>
<div class="t" style="left:1293.6999999999998px;width:20px;text-align:center;transform-origin:50% 50%;top:486.7px;font-size:12.32px;line-height:16px;color:#666;font-weight:400;transform:scaleX(0.8929);">€</div>
<div style="position:absolute;left:1330.1px;top:478.6px;width:225.8px;height:31px;border:1px solid #c9ced4;border-radius:3px;background:#f7f8f9;overflow:hidden"><div style="position:absolute;right:0;top:0;width:36px;height:29px;background:#e9ecef;border-left:1px solid #ced4da"></div></div>
<div class="t" style="right:366.4000000000001px;transform-origin:100% 50%;top:486.9px;font-size:13.22px;line-height:16px;color:#9a9a9a;font-weight:400;transform:scaleX(0.8929);">66201,00</div>
<div class="t" style="left:1527.6999999999998px;width:20px;text-align:center;transform-origin:50% 50%;top:486.7px;font-size:12.32px;line-height:16px;color:#666;font-weight:400;transform:scaleX(0.8929);">€</div>
<div style="position:absolute;left:1564.1px;top:478.6px;width:225.8px;height:31px;border:1px solid #c9ced4;border-radius:3px;background:#f7f8f9;overflow:hidden"><div style="position:absolute;right:0;top:0;width:36px;height:29px;background:#e9ecef;border-left:1px solid #ced4da"></div></div>
<div class="t" style="right:132.4000000000001px;transform-origin:100% 50%;top:486.9px;font-size:13.22px;line-height:16px;color:#9a9a9a;font-weight:400;transform:scaleX(0.8929);">61601,00</div>
<div class="t" style="left:1761.6999999999998px;width:20px;text-align:center;transform-origin:50% 50%;top:486.7px;font-size:12.32px;line-height:16px;color:#666;font-weight:400;transform:scaleX(0.8929);">€</div>
<div style="position:absolute;left:628.1px;top:521.7px;width:225.8px;height:31px;border:1px solid #c9ced4;border-radius:3px;background:#fff;overflow:hidden"><div style="position:absolute;right:0;top:0;width:36px;height:29px;background:#e9ecef;border-left:1px solid #ced4da"></div></div>
<div class="t" style="right:1068.4px;transform-origin:100% 50%;top:530.0px;font-size:13.22px;line-height:16px;color:#404040;font-weight:400;transform:scaleX(0.8929);">20947,00</div>
<div class="t" style="left:825.7px;width:20px;text-align:center;transform-origin:50% 50%;top:529.8px;font-size:12.32px;line-height:16px;color:#666;font-weight:400;transform:scaleX(0.8929);">€</div>
<div style="position:absolute;left:862.1px;top:521.7px;width:225.8px;height:31px;border:1px solid #c9ced4;border-radius:3px;background:#fff;overflow:hidden"><div style="position:absolute;right:0;top:0;width:36px;height:29px;background:#e9ecef;border-left:1px solid #ced4da"></div></div>
<div class="t" style="right:834.4000000000001px;transform-origin:100% 50%;top:530.0px;font-size:13.22px;line-height:16px;color:#404040;font-weight:400;transform:scaleX(0.8929);">23328,00</div>
<div class="t" style="left:1059.7px;width:20px;text-align:center;transform-origin:50% 50%;top:529.8px;font-size:12.32px;line-height:16px;color:#666;font-weight:400;transform:scaleX(0.8929);">€</div>
<div style="position:absolute;left:1096.1px;top:521.7px;width:225.8px;height:31px;border:1px solid #c9ced4;border-radius:3px;background:#fff;overflow:hidden"><div style="position:absolute;right:0;top:0;width:36px;height:29px;background:#e9ecef;border-left:1px solid #ced4da"></div></div>
<div class="t" style="right:600.4000000000001px;transform-origin:100% 50%;top:530.0px;font-size:13.22px;line-height:16px;color:#404040;font-weight:400;transform:scaleX(0.8929);">24942,00</div>
<div class="t" style="left:1293.6999999999998px;width:20px;text-align:center;transform-origin:50% 50%;top:529.8px;font-size:12.32px;line-height:16px;color:#666;font-weight:400;transform:scaleX(0.8929);">€</div>
<div style="position:absolute;left:1330.1px;top:521.7px;width:225.8px;height:31px;border:1px solid #c9ced4;border-radius:3px;background:#fff;overflow:hidden"><div style="position:absolute;right:0;top:0;width:36px;height:29px;background:#e9ecef;border-left:1px solid #ced4da"></div></div>
<div class="t" style="right:366.4000000000001px;transform-origin:100% 50%;top:530.0px;font-size:13.22px;line-height:16px;color:#404040;font-weight:400;transform:scaleX(0.8929);">18484,00</div>
<div class="t" style="left:1527.6999999999998px;width:20px;text-align:center;transform-origin:50% 50%;top:529.8px;font-size:12.32px;line-height:16px;color:#666;font-weight:400;transform:scaleX(0.8929);">€</div>
<div style="position:absolute;left:1564.1px;top:521.7px;width:225.8px;height:31px;border:1px solid #c9ced4;border-radius:3px;background:#fff;overflow:hidden"><div style="position:absolute;right:0;top:0;width:36px;height:29px;background:#e9ecef;border-left:1px solid #ced4da"></div></div>
<div class="t" style="right:132.4000000000001px;transform-origin:100% 50%;top:530.0px;font-size:13.22px;line-height:16px;color:#404040;font-weight:400;transform:scaleX(0.8929);">20387,00</div>
<div class="t" style="left:1761.6999999999998px;width:20px;text-align:center;transform-origin:50% 50%;top:529.8px;font-size:12.32px;line-height:16px;color:#666;font-weight:400;transform:scaleX(0.8929);">€</div>
<div style="position:absolute;left:628.1px;top:564.8px;width:225.8px;height:31px;border:1px solid #c9ced4;border-radius:3px;background:#fff;overflow:hidden"><div style="position:absolute;right:0;top:0;width:36px;height:29px;background:#e9ecef;border-left:1px solid #ced4da"></div></div>
<div class="t" style="right:1068.4px;transform-origin:100% 50%;top:573.1px;font-size:13.22px;line-height:16px;color:#404040;font-weight:400;transform:scaleX(0.8929);">24144,00</div>
<div class="t" style="left:825.7px;width:20px;text-align:center;transform-origin:50% 50%;top:572.9px;font-size:12.32px;line-height:16px;color:#666;font-weight:400;transform:scaleX(0.8929);">€</div>
<div style="position:absolute;left:862.1px;top:564.8px;width:225.8px;height:31px;border:1px solid #c9ced4;border-radius:3px;background:#fff;overflow:hidden"><div style="position:absolute;right:0;top:0;width:36px;height:29px;background:#e9ecef;border-left:1px solid #ced4da"></div></div>
<div class="t" style="right:834.4000000000001px;transform-origin:100% 50%;top:573.1px;font-size:13.22px;line-height:16px;color:#404040;font-weight:400;transform:scaleX(0.8929);">22055,00</div>
<div class="t" style="left:1059.7px;width:20px;text-align:center;transform-origin:50% 50%;top:572.9px;font-size:12.32px;line-height:16px;color:#666;font-weight:400;transform:scaleX(0.8929);">€</div>
<div style="position:absolute;left:1096.1px;top:564.8px;width:225.8px;height:31px;border:1px solid #c9ced4;border-radius:3px;background:#fff;overflow:hidden"><div style="position:absolute;right:0;top:0;width:36px;height:29px;background:#e9ecef;border-left:1px solid #ced4da"></div></div>
<div class="t" style="right:600.4000000000001px;transform-origin:100% 50%;top:573.1px;font-size:13.22px;line-height:16px;color:#404040;font-weight:400;transform:scaleX(0.8929);">21824,00</div>
<div class="t" style="left:1293.6999999999998px;width:20px;text-align:center;transform-origin:50% 50%;top:572.9px;font-size:12.32px;line-height:16px;color:#666;font-weight:400;transform:scaleX(0.8929);">€</div>
<div style="position:absolute;left:1330.1px;top:564.8px;width:225.8px;height:31px;border:1px solid #c9ced4;border-radius:3px;background:#fff;overflow:hidden"><div style="position:absolute;right:0;top:0;width:36px;height:29px;background:#e9ecef;border-left:1px solid #ced4da"></div></div>
<div class="t" style="right:366.4000000000001px;transform-origin:100% 50%;top:573.1px;font-size:13.22px;line-height:16px;color:#404040;font-weight:400;transform:scaleX(0.8929);">20735,00</div>
<div class="t" style="left:1527.6999999999998px;width:20px;text-align:center;transform-origin:50% 50%;top:572.9px;font-size:12.32px;line-height:16px;color:#666;font-weight:400;transform:scaleX(0.8929);">€</div>
<div style="position:absolute;left:1564.1px;top:564.8px;width:225.8px;height:31px;border:1px solid #c9ced4;border-radius:3px;background:#fff;overflow:hidden"><div style="position:absolute;right:0;top:0;width:36px;height:29px;background:#e9ecef;border-left:1px solid #ced4da"></div></div>
<div class="t" style="right:132.4000000000001px;transform-origin:100% 50%;top:573.1px;font-size:13.22px;line-height:16px;color:#404040;font-weight:400;transform:scaleX(0.8929);">23672,00</div>
<div class="t" style="left:1761.6999999999998px;width:20px;text-align:center;transform-origin:50% 50%;top:572.9px;font-size:12.32px;line-height:16px;color:#666;font-weight:400;transform:scaleX(0.8929);">€</div>
<div style="position:absolute;left:628.1px;top:607.9px;width:225.8px;height:31px;border:1px solid #c9ced4;border-radius:3px;background:#fff;overflow:hidden"><div style="position:absolute;right:0;top:0;width:36px;height:29px;background:#e9ecef;border-left:1px solid #ced4da"></div></div>
<div class="t" style="right:1068.4px;transform-origin:100% 50%;top:616.2px;font-size:13.22px;line-height:16px;color:#404040;font-weight:400;transform:scaleX(0.8929);">15074,00</div>
<div class="t" style="left:825.7px;width:20px;text-align:center;transform-origin:50% 50%;top:616.0px;font-size:12.32px;line-height:16px;color:#666;font-weight:400;transform:scaleX(0.8929);">€</div>
<div style="position:absolute;left:862.1px;top:607.9px;width:225.8px;height:31px;border:1px solid #c9ced4;border-radius:3px;background:#fff;overflow:hidden"><div style="position:absolute;right:0;top:0;width:36px;height:29px;background:#e9ecef;border-left:1px solid #ced4da"></div></div>
<div class="t" style="right:834.4000000000001px;transform-origin:100% 50%;top:616.2px;font-size:13.22px;line-height:16px;color:#404040;font-weight:400;transform:scaleX(0.8929);">21183,00</div>
<div class="t" style="left:1059.7px;width:20px;text-align:center;transform-origin:50% 50%;top:616.0px;font-size:12.32px;line-height:16px;color:#666;font-weight:400;transform:scaleX(0.8929);">€</div>
<div style="position:absolute;left:1096.1px;top:607.9px;width:225.8px;height:31px;border:1px solid #c9ced4;border-radius:3px;background:#fff;overflow:hidden"><div style="position:absolute;right:0;top:0;width:36px;height:29px;background:#e9ecef;border-left:1px solid #ced4da"></div></div>
<div class="t" style="right:600.4000000000001px;transform-origin:100% 50%;top:616.2px;font-size:13.22px;line-height:16px;color:#404040;font-weight:400;transform:scaleX(0.8929);">23052,00</div>
<div class="t" style="left:1293.6999999999998px;width:20px;text-align:center;transform-origin:50% 50%;top:616.0px;font-size:12.32px;line-height:16px;color:#666;font-weight:400;transform:scaleX(0.8929);">€</div>
<div style="position:absolute;left:1330.1px;top:607.9px;width:225.8px;height:31px;border:1px solid #c9ced4;border-radius:3px;background:#fff;overflow:hidden"><div style="position:absolute;right:0;top:0;width:36px;height:29px;background:#e9ecef;border-left:1px solid #ced4da"></div></div>
<div class="t" style="right:366.4000000000001px;transform-origin:100% 50%;top:616.2px;font-size:13.22px;line-height:16px;color:#404040;font-weight:400;transform:scaleX(0.8929);">26392,00</div>
<div class="t" style="left:1527.6999999999998px;width:20px;text-align:center;transform-origin:50% 50%;top:616.0px;font-size:12.32px;line-height:16px;color:#666;font-weight:400;transform:scaleX(0.8929);">€</div>
<div style="position:absolute;left:1564.1px;top:607.9px;width:225.8px;height:31px;border:1px solid #c9ced4;border-radius:3px;background:#fff;overflow:hidden"><div style="position:absolute;right:0;top:0;width:36px;height:29px;background:#e9ecef;border-left:1px solid #ced4da"></div></div>
<div class="t" style="right:132.4000000000001px;transform-origin:100% 50%;top:616.2px;font-size:13.22px;line-height:16px;color:#404040;font-weight:400;transform:scaleX(0.8929);">16625,00</div>
<div class="t" style="left:1761.6999999999998px;width:20px;text-align:center;transform-origin:50% 50%;top:616.0px;font-size:12.32px;line-height:16px;color:#666;font-weight:400;transform:scaleX(0.8929);">€</div>
<div style="position:absolute;left:628.1px;top:651.0px;width:225.8px;height:31px;border:1px solid #c9ced4;border-radius:3px;background:#fff;overflow:hidden"><div style="position:absolute;right:0;top:0;width:36px;height:29px;background:#e9ecef;border-left:1px solid #ced4da"></div></div>
<div class="t" style="right:1068.4px;transform-origin:100% 50%;top:659.2px;font-size:13.22px;line-height:16px;color:#404040;font-weight:400;transform:scaleX(0.8929);">671,00</div>
<div class="t" style="left:825.7px;width:20px;text-align:center;transform-origin:50% 50%;top:659.0px;font-size:12.32px;line-height:16px;color:#666;font-weight:400;transform:scaleX(0.8929);">€</div>
<div style="position:absolute;left:862.1px;top:651.0px;width:225.8px;height:31px;border:1px solid #c9ced4;border-radius:3px;background:#fff;overflow:hidden"><div style="position:absolute;right:0;top:0;width:36px;height:29px;background:#e9ecef;border-left:1px solid #ced4da"></div></div>
<div class="t" style="right:834.4000000000001px;transform-origin:100% 50%;top:659.2px;font-size:13.22px;line-height:16px;color:#404040;font-weight:400;transform:scaleX(0.8929);">833,00</div>
<div class="t" style="left:1059.7px;width:20px;text-align:center;transform-origin:50% 50%;top:659.0px;font-size:12.32px;line-height:16px;color:#666;font-weight:400;transform:scaleX(0.8929);">€</div>
<div style="position:absolute;left:1096.1px;top:651.0px;width:225.8px;height:31px;border:1px solid #c9ced4;border-radius:3px;background:#fff;overflow:hidden"><div style="position:absolute;right:0;top:0;width:36px;height:29px;background:#e9ecef;border-left:1px solid #ced4da"></div></div>
<div class="t" style="right:600.4000000000001px;transform-origin:100% 50%;top:659.2px;font-size:13.22px;line-height:16px;color:#404040;font-weight:400;transform:scaleX(0.8929);">523,00</div>
<div class="t" style="left:1293.6999999999998px;width:20px;text-align:center;transform-origin:50% 50%;top:659.0px;font-size:12.32px;line-height:16px;color:#666;font-weight:400;transform:scaleX(0.8929);">€</div>
<div style="position:absolute;left:1330.1px;top:651.0px;width:225.8px;height:31px;border:1px solid #c9ced4;border-radius:3px;background:#fff;overflow:hidden"><div style="position:absolute;right:0;top:0;width:36px;height:29px;background:#e9ecef;border-left:1px solid #ced4da"></div></div>
<div class="t" style="right:366.4000000000001px;transform-origin:100% 50%;top:659.2px;font-size:13.22px;line-height:16px;color:#404040;font-weight:400;transform:scaleX(0.8929);">590,00</div>
<div class="t" style="left:1527.6999999999998px;width:20px;text-align:center;transform-origin:50% 50%;top:659.0px;font-size:12.32px;line-height:16px;color:#666;font-weight:400;transform:scaleX(0.8929);">€</div>
<div style="position:absolute;left:1564.1px;top:651.0px;width:225.8px;height:31px;border:1px solid #c9ced4;border-radius:3px;background:#fff;overflow:hidden"><div style="position:absolute;right:0;top:0;width:36px;height:29px;background:#e9ecef;border-left:1px solid #ced4da"></div></div>
<div class="t" style="right:132.4000000000001px;transform-origin:100% 50%;top:659.2px;font-size:13.22px;line-height:16px;color:#404040;font-weight:400;transform:scaleX(0.8929);">917,00</div>
<div class="t" style="left:1761.6999999999998px;width:20px;text-align:center;transform-origin:50% 50%;top:659.0px;font-size:12.32px;line-height:16px;color:#666;font-weight:400;transform:scaleX(0.8929);">€</div>
<div style="position:absolute;left:628.1px;top:694.1px;width:225.8px;height:31px;border:1px solid #c9ced4;border-radius:3px;background:#fff;overflow:hidden"><div style="position:absolute;right:0;top:0;width:36px;height:29px;background:#e9ecef;border-left:1px solid #ced4da"></div></div>
<div class="t" style="right:1068.4px;transform-origin:100% 50%;top:702.4px;font-size:13.22px;line-height:16px;color:#404040;font-weight:400;transform:scaleX(0.8929);">60774,00</div>
<div class="t" style="left:825.7px;width:20px;text-align:center;transform-origin:50% 50%;top:702.1px;font-size:12.32px;line-height:16px;color:#666;font-weight:400;transform:scaleX(0.8929);">€</div>
<div style="position:absolute;left:862.1px;top:694.1px;width:225.8px;height:31px;border:1px solid #c9ced4;border-radius:3px;background:#fff;overflow:hidden"><div style="position:absolute;right:0;top:0;width:36px;height:29px;background:#e9ecef;border-left:1px solid #ced4da"></div></div>
<div class="t" style="right:834.4000000000001px;transform-origin:100% 50%;top:702.4px;font-size:13.22px;line-height:16px;color:#404040;font-weight:400;transform:scaleX(0.8929);">74334,00</div>
<div class="t" style="left:1059.7px;width:20px;text-align:center;transform-origin:50% 50%;top:702.1px;font-size:12.32px;line-height:16px;color:#666;font-weight:400;transform:scaleX(0.8929);">€</div>
<div style="position:absolute;left:1096.1px;top:694.1px;width:225.8px;height:31px;border:1px solid #c9ced4;border-radius:3px;background:#fff;overflow:hidden"><div style="position:absolute;right:0;top:0;width:36px;height:29px;background:#e9ecef;border-left:1px solid #ced4da"></div></div>
<div class="t" style="right:600.4000000000001px;transform-origin:100% 50%;top:702.4px;font-size:13.22px;line-height:16px;color:#404040;font-weight:400;transform:scaleX(0.8929);">79948,00</div>
<div class="t" style="left:1293.6999999999998px;width:20px;text-align:center;transform-origin:50% 50%;top:702.1px;font-size:12.32px;line-height:16px;color:#666;font-weight:400;transform:scaleX(0.8929);">€</div>
<div style="position:absolute;left:1330.1px;top:694.1px;width:225.8px;height:31px;border:1px solid #c9ced4;border-radius:3px;background:#fff;overflow:hidden"><div style="position:absolute;right:0;top:0;width:36px;height:29px;background:#e9ecef;border-left:1px solid #ced4da"></div></div>
<div class="t" style="right:366.4000000000001px;transform-origin:100% 50%;top:702.4px;font-size:13.22px;line-height:16px;color:#404040;font-weight:400;transform:scaleX(0.8929);">88223,00</div>
<div class="t" style="left:1527.6999999999998px;width:20px;text-align:center;transform-origin:50% 50%;top:702.1px;font-size:12.32px;line-height:16px;color:#666;font-weight:400;transform:scaleX(0.8929);">€</div>
<div style="position:absolute;left:1564.1px;top:694.1px;width:225.8px;height:31px;border:1px solid #c9ced4;border-radius:3px;background:#fff;overflow:hidden"><div style="position:absolute;right:0;top:0;width:36px;height:29px;background:#e9ecef;border-left:1px solid #ced4da"></div></div>
<div class="t" style="right:132.4000000000001px;transform-origin:100% 50%;top:702.4px;font-size:13.22px;line-height:16px;color:#404040;font-weight:400;transform:scaleX(0.8929);">82911,00</div>
<div class="t" style="left:1761.6999999999998px;width:20px;text-align:center;transform-origin:50% 50%;top:702.1px;font-size:12.32px;line-height:16px;color:#666;font-weight:400;transform:scaleX(0.8929);">€</div>
<div style="position:absolute;left:628.1px;top:737.2px;width:225.8px;height:31px;border:1px solid #c9ced4;border-radius:3px;background:#fff;overflow:hidden"><div style="position:absolute;right:0;top:0;width:36px;height:29px;background:#e9ecef;border-left:1px solid #ced4da"></div></div>
<div class="t" style="right:1068.4px;transform-origin:100% 50%;top:745.5px;font-size:13.22px;line-height:16px;color:#404040;font-weight:400;transform:scaleX(0.8929);">32,00</div>
<div style="position:absolute;left:862.1px;top:737.2px;width:225.8px;height:31px;border:1px solid #c9ced4;border-radius:3px;background:#fff;overflow:hidden"><div style="position:absolute;right:0;top:0;width:36px;height:29px;background:#e9ecef;border-left:1px solid #ced4da"></div></div>
<div class="t" style="right:834.4000000000001px;transform-origin:100% 50%;top:745.5px;font-size:13.22px;line-height:16px;color:#404040;font-weight:400;transform:scaleX(0.8929);">31,00</div>
<div style="position:absolute;left:1096.1px;top:737.2px;width:225.8px;height:31px;border:1px solid #c9ced4;border-radius:3px;background:#fff;overflow:hidden"><div style="position:absolute;right:0;top:0;width:36px;height:29px;background:#e9ecef;border-left:1px solid #ced4da"></div></div>
<div class="t" style="right:600.4000000000001px;transform-origin:100% 50%;top:745.5px;font-size:13.22px;line-height:16px;color:#404040;font-weight:400;transform:scaleX(0.8929);">44,00</div>
<div style="position:absolute;left:1330.1px;top:737.2px;width:225.8px;height:31px;border:1px solid #c9ced4;border-radius:3px;background:#fff;overflow:hidden"><div style="position:absolute;right:0;top:0;width:36px;height:29px;background:#e9ecef;border-left:1px solid #ced4da"></div></div>
<div class="t" style="right:366.4000000000001px;transform-origin:100% 50%;top:745.5px;font-size:13.22px;line-height:16px;color:#404040;font-weight:400;transform:scaleX(0.8929);">32,00</div>
<div style="position:absolute;left:1564.1px;top:737.2px;width:225.8px;height:31px;border:1px solid #c9ced4;border-radius:3px;background:#fff;overflow:hidden"><div style="position:absolute;right:0;top:0;width:36px;height:29px;background:#e9ecef;border-left:1px solid #ced4da"></div></div>
<div class="t" style="right:132.4000000000001px;transform-origin:100% 50%;top:745.5px;font-size:13.22px;line-height:16px;color:#404040;font-weight:400;transform:scaleX(0.8929);">25,00</div>
<div style="position:absolute;left:628.1px;top:780.3px;width:225.8px;height:31px;border:1px solid #c9ced4;border-radius:3px;background:#fff;overflow:hidden"><div style="position:absolute;right:0;top:0;width:36px;height:29px;background:#e9ecef;border-left:1px solid #ced4da"></div></div>
<div class="t" style="right:1068.4px;transform-origin:100% 50%;top:788.5px;font-size:13.22px;line-height:16px;color:#404040;font-weight:400;transform:scaleX(0.8929);">775,00</div>
<div style="position:absolute;left:862.1px;top:780.3px;width:225.8px;height:31px;border:1px solid #c9ced4;border-radius:3px;background:#fff;overflow:hidden"><div style="position:absolute;right:0;top:0;width:36px;height:29px;background:#e9ecef;border-left:1px solid #ced4da"></div></div>
<div class="t" style="right:834.4000000000001px;transform-origin:100% 50%;top:788.5px;font-size:13.22px;line-height:16px;color:#404040;font-weight:400;transform:scaleX(0.8929);">840,00</div>
<div style="position:absolute;left:1096.1px;top:780.3px;width:225.8px;height:31px;border:1px solid #c9ced4;border-radius:3px;background:#fff;overflow:hidden"><div style="position:absolute;right:0;top:0;width:36px;height:29px;background:#e9ecef;border-left:1px solid #ced4da"></div></div>
<div class="t" style="right:600.4000000000001px;transform-origin:100% 50%;top:788.5px;font-size:13.22px;line-height:16px;color:#404040;font-weight:400;transform:scaleX(0.8929);">805,00</div>
<div style="position:absolute;left:1330.1px;top:780.3px;width:225.8px;height:31px;border:1px solid #c9ced4;border-radius:3px;background:#fff;overflow:hidden"><div style="position:absolute;right:0;top:0;width:36px;height:29px;background:#e9ecef;border-left:1px solid #ced4da"></div></div>
<div class="t" style="right:366.4000000000001px;transform-origin:100% 50%;top:788.5px;font-size:13.22px;line-height:16px;color:#404040;font-weight:400;transform:scaleX(0.8929);">837,00</div>
<div style="position:absolute;left:1564.1px;top:780.3px;width:225.8px;height:31px;border:1px solid #c9ced4;border-radius:3px;background:#fff;overflow:hidden"><div style="position:absolute;right:0;top:0;width:36px;height:29px;background:#e9ecef;border-left:1px solid #ced4da"></div></div>
<div class="t" style="right:132.4000000000001px;transform-origin:100% 50%;top:788.5px;font-size:13.22px;line-height:16px;color:#404040;font-weight:400;transform:scaleX(0.8929);">900,00</div>
<div style="position:absolute;left:628.1px;top:823.4px;width:225.8px;height:31px;border:1px solid #c9ced4;border-radius:3px;background:#fff;overflow:hidden"><div style="position:absolute;right:0;top:0;width:36px;height:29px;background:#e9ecef;border-left:1px solid #ced4da"></div></div>
<div class="t" style="right:1068.4px;transform-origin:100% 50%;top:831.7px;font-size:13.22px;line-height:16px;color:#404040;font-weight:400;transform:scaleX(0.8929);">444806,00</div>
<div style="position:absolute;left:862.1px;top:823.4px;width:225.8px;height:31px;border:1px solid #c9ced4;border-radius:3px;background:#fff;overflow:hidden"><div style="position:absolute;right:0;top:0;width:36px;height:29px;background:#e9ecef;border-left:1px solid #ced4da"></div></div>
<div class="t" style="right:834.4000000000001px;transform-origin:100% 50%;top:831.7px;font-size:13.22px;line-height:16px;color:#404040;font-weight:400;transform:scaleX(0.8929);">440652,00</div>
<div style="position:absolute;left:1096.1px;top:823.4px;width:225.8px;height:31px;border:1px solid #c9ced4;border-radius:3px;background:#fff;overflow:hidden"><div style="position:absolute;right:0;top:0;width:36px;height:29px;background:#e9ecef;border-left:1px solid #ced4da"></div></div>
<div class="t" style="right:600.4000000000001px;transform-origin:100% 50%;top:831.7px;font-size:13.22px;line-height:16px;color:#404040;font-weight:400;transform:scaleX(0.8929);">432987,00</div>
<div style="position:absolute;left:1330.1px;top:823.4px;width:225.8px;height:31px;border:1px solid #c9ced4;border-radius:3px;background:#fff;overflow:hidden"><div style="position:absolute;right:0;top:0;width:36px;height:29px;background:#e9ecef;border-left:1px solid #ced4da"></div></div>
<div class="t" style="right:366.4000000000001px;transform-origin:100% 50%;top:831.7px;font-size:13.22px;line-height:16px;color:#404040;font-weight:400;transform:scaleX(0.8929);">386707,00</div>
<div style="position:absolute;left:1564.1px;top:823.4px;width:225.8px;height:31px;border:1px solid #c9ced4;border-radius:3px;background:#fff;overflow:hidden"><div style="position:absolute;right:0;top:0;width:36px;height:29px;background:#e9ecef;border-left:1px solid #ced4da"></div></div>
<div class="t" style="right:132.4000000000001px;transform-origin:100% 50%;top:831.7px;font-size:13.22px;line-height:16px;color:#404040;font-weight:400;transform:scaleX(0.8929);">500000,00</div>
<svg style="left:0;top:0" width="1879" height="900"><polyline points="603.8,489.95000000000005 607.8,494.15000000000003 603.8,498.35" fill="none" stroke="#333" stroke-width="1.5" stroke-linecap="round" stroke-linejoin="round"/><polyline points="603.8,533.05 607.8,537.25 603.8,541.45" fill="none" stroke="#333" stroke-width="1.5" stroke-linecap="round" stroke-linejoin="round"/><polyline points="603.8,576.15 607.8,580.35 603.8,584.5500000000001" fill="none" stroke="#333" stroke-width="1.5" stroke-linecap="round" stroke-linejoin="round"/><polyline points="603.8,619.25 607.8,623.45 603.8,627.6500000000001" fill="none" stroke="#333" stroke-width="1.5" stroke-linecap="round" stroke-linejoin="round"/><polyline points="603.8,662.3499999999999 607.8,666.55 603.8,670.75" fill="none" stroke="#333" stroke-width="1.5" stroke-linecap="round" stroke-linejoin="round"/><polyline points="603.8,705.4499999999999 607.8,709.65 603.8,713.85" fill="none" stroke="#333" stroke-width="1.5" stroke-linecap="round" stroke-linejoin="round"/><polyline points="603.8,748.55 607.8,752.75 603.8,756.95" fill="none" stroke="#333" stroke-width="1.5" stroke-linecap="round" stroke-linejoin="round"/><polyline points="603.8,791.6499999999999 607.8,795.8499999999999 603.8,800.05" fill="none" stroke="#333" stroke-width="1.5" stroke-linecap="round" stroke-linejoin="round"/><polyline points="603.8,834.75 607.8,838.95 603.8,843.1500000000001" fill="none" stroke="#333" stroke-width="1.5" stroke-linecap="round" stroke-linejoin="round"/></svg>
<div style="position:absolute;left:291px;top:487.2px;width:18.3px;height:17.2px;background:#eceef1;border:1px solid #c9cdd2;border-radius:3.5px"></div>
<svg style="left:0;top:0" width="600" height="600"><rect x="297.2" y="491.4" width="5.8" height="8.4" rx="0.9" fill="none" stroke="#666" stroke-width="1.1"/><rect x="298.2" y="492.6" width="3.8" height="1.4" fill="#fff"/><g fill="#999"><rect x="298.3" y="495" width="1.2" height="1.2"/><rect x="300.7" y="495" width="1.2" height="1.2"/><rect x="298.3" y="497.3" width="1.2" height="1.2"/><rect x="300.7" y="497.3" width="1.2" height="1.2"/></g></svg>
<div class="t" style="left:315.7px;transform-origin:0 50%;top:487.4px;font-size:13.33px;line-height:16px;color:#111;font-weight:700;transform:scaleX(0.8929);">Dépense publique</div>
<svg style="left:0;top:0" width="600" height="600"><circle cx="428" cy="495" r="6" fill="#a9b5c4"/><rect x="427.2" y="493.5" width="1.6" height="4.5" fill="#fff"/><rect x="427.2" y="491" width="1.6" height="1.6" fill="#fff"/></svg>
<svg style="left:0;top:0" width="600" height="900"><path d="M306.9,533.65 v2.6 a2.2,2.2 0 0 0 2.2,2.2 h5" fill="none" stroke="#555" stroke-width="2.3" stroke-linecap="round"/><polygon points="313.2,534.65 318.2,538.45 313.2,541.85" fill="#555"/></svg>
<div class="t" style="left:328px;transform-origin:0 50%;top:530.8px;font-size:13.44px;line-height:16px;color:#333;font-weight:400;transform:scaleX(0.8929);">Rémunération</div>
<svg style="left:0;top:0" width="600" height="900"><path d="M306.9,576.75 v2.6 a2.2,2.2 0 0 0 2.2,2.2 h5" fill="none" stroke="#555" stroke-width="2.3" stroke-linecap="round"/><polygon points="313.2,577.75 318.2,581.5500000000001 313.2,584.95" fill="#555"/></svg>
<div class="t" style="left:328px;transform-origin:0 50%;top:573.9px;font-size:13.44px;line-height:16px;color:#333;font-weight:400;transform:scaleX(0.8929);">Achat de biens et services</div>
<svg style="left:0;top:0" width="600" height="900"><path d="M306.9,619.85 v2.6 a2.2,2.2 0 0 0 2.2,2.2 h5" fill="none" stroke="#555" stroke-width="2.3" stroke-linecap="round"/><polygon points="313.2,620.85 318.2,624.6500000000001 313.2,628.0500000000001" fill="#555"/></svg>
<div class="t" style="left:328px;transform-origin:0 50%;top:617.0px;font-size:13.44px;line-height:16px;color:#333;font-weight:400;transform:scaleX(0.8929);">Subventions allouées</div>
<svg style="left:0;top:0" width="600" height="900"><path d="M306.9,662.9499999999999 v2.6 a2.2,2.2 0 0 0 2.2,2.2 h5" fill="none" stroke="#555" stroke-width="2.3" stroke-linecap="round"/><polygon points="313.2,663.9499999999999 318.2,667.75 313.2,671.15" fill="#555"/></svg>
<div class="t" style="left:328px;transform-origin:0 50%;top:660.0px;font-size:13.44px;line-height:16px;color:#333;font-weight:400;transform:scaleX(0.8929);">Autres dépenses</div>
<div class="t" style="left:291.3px;transform-origin:0 50%;top:703.1px;font-size:13.44px;line-height:16px;color:#333;font-weight:400;transform:scaleX(0.8929);">Budget engagé</div>
<div class="t" style="left:291.3px;transform-origin:0 50%;top:746.2px;font-size:13.44px;line-height:16px;color:#333;font-weight:400;transform:scaleX(0.8929);">Nombre de pôle de spécialisation créés</div>
<div class="t" style="left:291.3px;transform-origin:0 50%;top:789.3px;font-size:13.44px;line-height:16px;color:#333;font-weight:400;transform:scaleX(0.8929);">Nombre de structure de soins bénéficiant de la pr...</div>
<div class="t" style="left:291.3px;transform-origin:0 50%;top:832.5px;font-size:13.44px;line-height:16px;color:#333;font-weight:400;transform:scaleX(0.8929);">Nombre de lits hospitaliers disponibles</div>
<svg style="left:0;top:0" width="600" height="900"><path d="M504,833.45 l4.8,1.8 v2.8 c0,3 -2,5 -4.8,6.4 c-2.8,-1.4 -4.8,-3.4 -4.8,-6.4 v-2.8z" fill="#222"/><polyline points="502,839.1500000000001 503.6,840.75 506.4,837.75" fill="none" stroke="#fff" stroke-width="1.3"/></svg>
<div style="position:absolute;left:1561.6px;top:820.8px;width:45.5px;height:20.5px;background:#fff;border-radius:4px;box-shadow:0 1px 3px rgba(0,0,0,0.15)"></div>
<svg style="left:0;top:0" width="1879" height="900"><path d="M1567.8,825.8 h9.4 l-3.6,6 3.6,6 h-9.4 l3.6,-6z" fill="#666"/><path d="M1570.2,827.3 h4.6 l-0.8,1.3 h-3z M1570.6,836.3 l1.9,-2.6 1.9,2.6z" fill="#fff"/><circle cx="1583.2" cy="832" r="6" fill="#777"/><polyline points="1580.5,832.2 1582.5,834.2 1586,830.2" fill="none" stroke="#fff" stroke-width="1.2"/><circle cx="1603.3" cy="824.9" r="10" fill="#999"/><rect x="1600.4" y="821.5" width="5.8" height="7.8" rx="0.8" fill="#e6e6e6"/><rect x="1599.6" y="820.4" width="7.4" height="1.2" fill="#e6e6e6"/><rect x="1602.3" y="819.4" width="2" height="1.2" fill="#e6e6e6"/><g fill="#aaa"><rect x="1601.8" y="822.6" width="0.8" height="5.6"/><rect x="1603.9" y="822.6" width="0.8" height="5.6"/></g></svg>
<div style="position:absolute;left:513.7px;top:806.7px;width:145px;height:65.7px;background:#4b4f56;border-radius:4px"></div>
<svg style="left:0;top:0" width="900" height="900"><polygon points="513.7,835 509.5,839.5 513.7,844" fill="#4b4f56"/></svg>
<div class="t" style="left:519.5px;transform-origin:0 50%;top:814.0px;font-size:13.10px;line-height:16px;color:#fff;font-weight:400;transform:scaleX(0.8929);">Les changements sur cet</div>
<div class="t" style="left:519.5px;transform-origin:0 50%;top:832.0px;font-size:13.10px;line-height:16px;color:#fff;font-weight:400;transform:scaleX(0.8929);">indicateur nécessitent</div>
<div class="t" style="left:519.5px;transform-origin:0 50%;top:850.0px;font-size:13.10px;line-height:16px;color:#fff;font-weight:400;transform:scaleX(0.8929);">une validation</div>
<div style="position:absolute;left:344.5px;top:338.0px;width:35px;height:35px;background:#4d7ba1;border-radius:50%"></div>
<div class="t" style="left:344.5px;width:35px;text-align:center;transform-origin:50% 50%;top:344.5px;font-size:21.28px;line-height:22px;color:#fff;font-weight:400;transform:scaleX(0.8929);-webkit-text-stroke:0">2</div>
<div style="position:absolute;left:568.5px;top:338.0px;width:35px;height:35px;background:#4d7ba1;border-radius:50%"></div>
<div class="t" style="left:568.5px;width:35px;text-align:center;transform-origin:50% 50%;top:344.5px;font-size:21.28px;line-height:22px;color:#fff;font-weight:400;transform:scaleX(0.8929);-webkit-text-stroke:0">2</div>
<div style="position:absolute;left:470.5px;top:860.0px;width:35px;height:35px;background:#4d7ba1;border-radius:50%"></div>
<div class="t" style="left:470.5px;width:35px;text-align:center;transform-origin:50% 50%;top:866.5px;font-size:21.28px;line-height:22px;color:#fff;font-weight:400;transform:scaleX(0.8929);-webkit-text-stroke:0">1</div>
<div style="position:absolute;left:1801.1px;top:818.1px;width:35px;height:35px;background:#4d7ba1;border-radius:50%"></div>
<div class="t" style="left:1801.1px;width:35px;text-align:center;transform-origin:50% 50%;top:824.6px;font-size:21.28px;line-height:22px;color:#fff;font-weight:400;transform:scaleX(0.8929);-webkit-text-stroke:0">3</div>
<div style="position:absolute;left:2px;top:2px;width:1873px;height:1286.5px;border:2px solid #dcdcdc;border-radius:19px;box-shadow:0 0 0 30px #fff"></div>
</body></html>
